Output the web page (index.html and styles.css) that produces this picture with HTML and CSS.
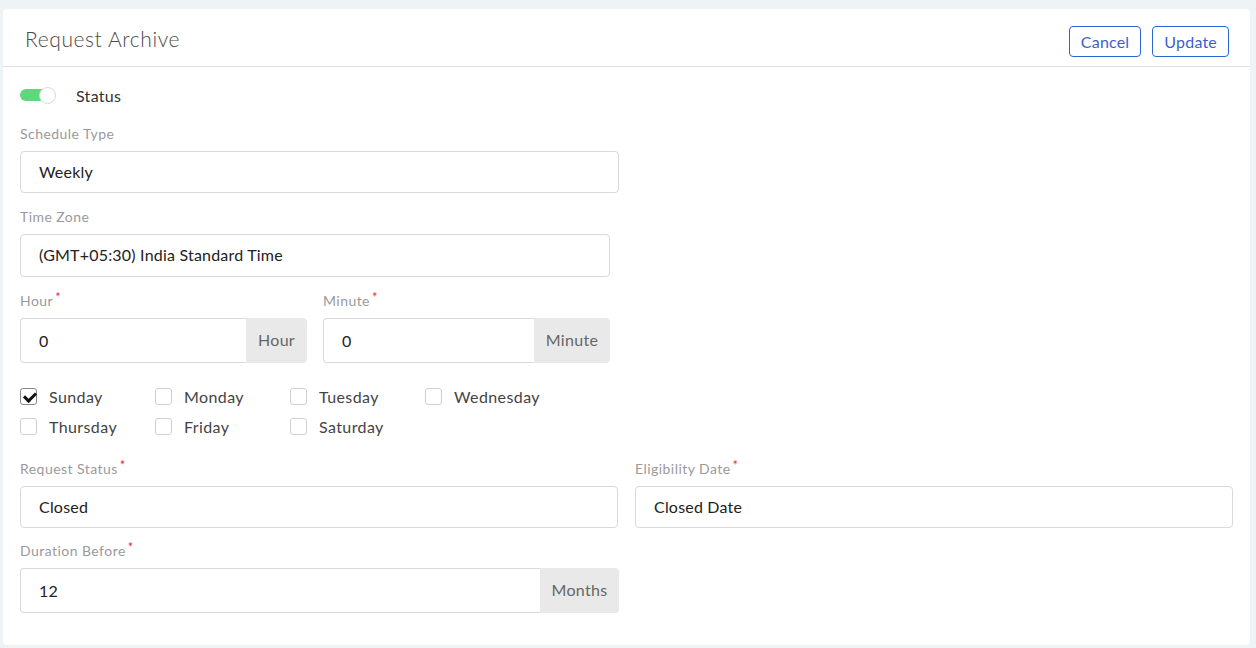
FILE: index.html
```html
<!DOCTYPE html>
<html lang="en">

<head>
    <meta charset="utf-8">
    <meta name="viewport" content="width=device-width, initial-scale=1.0">
    <title>Request Archive</title>
    <link rel="stylesheet" href="styles.css">
</head>

<body>

<div class="card">
    <!-- 顶部标题栏 -->
    <div class="card-header">
        <div class="card-title">Request Archive</div>
        <div class="actions">
            <button class="btn">Cancel</button>
            <button class="btn">Update</button>
        </div>
    </div>

    <div class="card-body">
        <div class="status-row">
            <span class="switch"><span class="knob"></span></span>
            <span class="status-text">Status</span>
        </div>

        <div class="field w598">
            <div class="label">Schedule Type</div>
            <div class="input">Weekly</div>
        </div>

        <div class="field w589">
            <div class="label">Time Zone</div>
            <div class="input tall">(GMT+05:30) India Standard Time</div>
        </div>

        <div class="time-row">
            <div class="field">
                <div class="label">Hour<span class="req">*</span></div>
                <div class="group">
                    <div class="input">0</div>
                    <div class="addon">Hour</div>
                </div>
            </div>
            <div class="field">
                <div class="label">Minute<span class="req">*</span></div>
                <div class="group">
                    <div class="input">0</div>
                    <div class="addon addon-wide">Minute</div>
                </div>
            </div>
        </div>

        <div class="days">
            <label class="day"><span class="box checked"></span>Sunday</label>
            <label class="day"><span class="box"></span>Monday</label>
            <label class="day"><span class="box"></span>Tuesday</label>
            <label class="day"><span class="box"></span>Wednesday</label>
            <label class="day"><span class="box"></span>Thursday</label>
            <label class="day"><span class="box"></span>Friday</label>
            <label class="day"><span class="box"></span>Saturday</label>
        </div>

        <div class="two-col">
            <div class="field">
                <div class="label">Request Status<span class="req">*</span></div>
                <div class="input">Closed</div>
            </div>
            <div class="field">
                <div class="label">Eligibility Date<span class="req">*</span></div>
                <div class="input">Closed Date</div>
            </div>
        </div>

        <div class="field w598">
            <div class="label">Duration Before<span class="req">*</span></div>
            <div class="group">
                <div class="input">12</div>
                <div class="addon addon-months">Months</div>
            </div>
        </div>
    </div>
</div>

</body>

</html>
```

FILE: styles.css
```css
/* 全局 */
*
{
    box-sizing: border-box;
    margin: 0;
}

body
{
    background-color: #eef3f6;
    padding: 9px 6px 3px 3px;
    font-family: "Lato", "Open Sans", sans-serif;
    color: #333;
}

.card
{
    background-color: #ffffff;
    border-radius: 4px;
    height: 636px;
}

/* 标题栏 */
.card-header
{
    display: flex;
    justify-content: space-between;
    align-items: center;
    height: 58px;
    padding: 0 21px 0 22px;
    border-bottom: 1px solid #dedede;
}

.card-title
{
    font-size: 21px;
    font-weight: 300;
    color: #4a4a4a;
    letter-spacing: 0.6px;
    padding-top: 1px;
}

.actions
{
    display: flex;
    gap: 11px;
    padding-top: 8px;
}

.btn
{
    height: 31px;
    padding: 0 11px;
    border: 1px solid #2a64d6;
    border-radius: 4px;
    background: #fff;
    color: #3d5fce;
    font-family: inherit;
    font-size: 16px;
    letter-spacing: 0.2px;
}

.card-body
{
    padding: 19px 17px 0 17px;
}

/* 开关 */
.status-row
{
    display: flex;
    align-items: center;
    height: 18px;
    margin-bottom: 21px;
}

.switch
{
    position: relative;
    width: 33px;
    height: 12px;
    border-radius: 6px;
    background-color: #62d67a;
}

.knob
{
    position: absolute;
    right: -3px;
    top: -2px;
    width: 17px;
    height: 17px;
    border-radius: 50%;
    background: #fff;
    border: 1px solid #d4d8dc;
}

.status-text
{
    margin-left: 23px;
    font-size: 16px;
    color: #333;
    letter-spacing: 0.3px;
}

/* 表单 */
.field
{
    margin-bottom: 15px;
}

.w598
{
    width: 599px;
}

.w589
{
    width: 590px;
}

.label
{
    font-size: 14px;
    color: #9a9a9a;
    height: 20px;
    margin-bottom: 6px;
    letter-spacing: 0.45px;
}

.req
{
    color: #e0303a;
    font-size: 13px;
    position: relative;
    top: -4px;
    margin-left: 2px;
}

.input
{
    height: 42px;
    line-height: 40px;
    padding-left: 18px;
    border: 1px solid #d9d9d9;
    border-radius: 4px;
    font-size: 16px;
    color: #222;
    background: #fff;
    letter-spacing: 0.2px;
}

.input.tall
{
    height: 43px;
}

.group
{
    display: flex;
    height: 45px;
}

.group .input
{
    flex: 1;
    height: 45px;
    line-height: 43px;
    border-radius: 4px 0 0 4px;
    border-right: none;
}

.addon
{
    width: 61px;
    line-height: 43px;
    text-align: center;
    background-color: #e9e9e9;
    border-radius: 0 4px 4px 0;
    color: #666;
    font-size: 16px;
    letter-spacing: 0.3px;
}

.addon-wide
{
    width: 76px;
}

.addon-months
{
    width: 79px;
}

.time-row
{
    display: flex;
    gap: 16px;
    width: 590px;
    margin-bottom: 8px;
}

.time-row .field
{
    flex: 1;
}

/* 星期复选框 */
.days
{
    display: flex;
    flex-wrap: wrap;
    width: 540px;
    row-gap: 10px;
    margin-bottom: 24px;
}

.day
{
    display: flex;
    align-items: center;
    width: 135px;
    height: 20px;
    font-size: 16px;
    color: #444;
    letter-spacing: 0.4px;
}

.box
{
    width: 17px;
    height: 17px;
    border: 1px solid #cfcfcf;
    border-radius: 3px;
    margin-right: 12px;
    position: relative;
}

.box.checked
{
    border-color: #888;
}

.box.checked::after
{
    content: "";
    position: absolute;
    left: 5px;
    top: 1px;
    width: 5px;
    height: 9px;
    border: solid #111;
    border-width: 0 3px 3px 0;
    transform: rotate(45deg);
}

.two-col
{
    display: flex;
    gap: 17px;
    width: 1213px;
}

.two-col .field
{
    flex: 1;
    margin-bottom: 14px;
}
```
